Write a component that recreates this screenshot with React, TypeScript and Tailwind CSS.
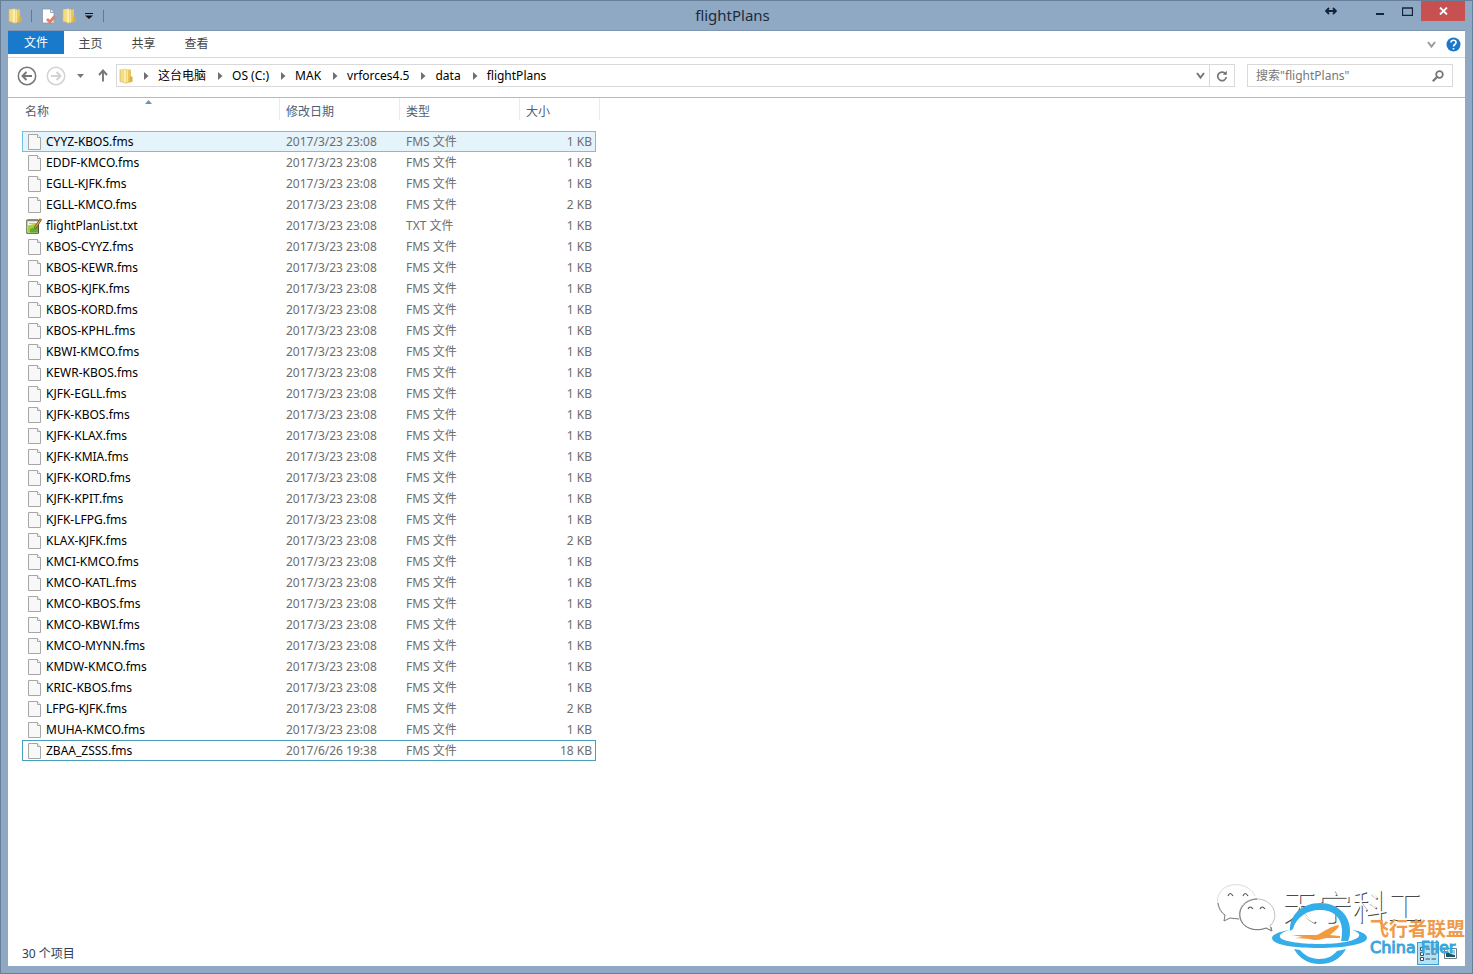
import React from "react";

type FileRow = { name: string; date: string; kind: string; size: string };

const common = "2017/3/23 23:08";
const twoKb = ["EGLL-KMCO", "KLAX-KJFK", "LFPG-KJFK"];
const plans = [
  "CYYZ-KBOS", "EDDF-KMCO", "EGLL-KJFK", "EGLL-KMCO", "flightPlanList", "KBOS-CYYZ",
  "KBOS-KEWR", "KBOS-KJFK", "KBOS-KORD", "KBOS-KPHL", "KBWI-KMCO", "KEWR-KBOS",
  "KJFK-EGLL", "KJFK-KBOS", "KJFK-KLAX", "KJFK-KMIA", "KJFK-KORD", "KJFK-KPIT",
  "KJFK-LFPG", "KLAX-KJFK", "KMCI-KMCO", "KMCO-KATL", "KMCO-KBOS", "KMCO-KBWI",
  "KMCO-MYNN", "KMDW-KMCO", "KRIC-KBOS", "LFPG-KJFK", "MUHA-KMCO",
];

const files: FileRow[] = [
  ...plans.map((p) => ({
    name: p === "flightPlanList" ? "flightPlanList.txt" : `${p}.fms`,
    date: common,
    kind: p === "flightPlanList" ? "TXT 文件" : "FMS 文件",
    size: twoKb.includes(p) ? "2 KB" : "1 KB",
  })),
  { name: "ZBAA_ZSSS.fms", date: "2017/6/26 19:38", kind: "FMS 文件", size: "18 KB" },
];

const crumbs = ["这台电脑", "OS (C:)", "MAK", "vrforces4.5", "data", "flightPlans"];

function FolderIcon() {
  return (
    <svg width="16" height="16" viewBox="0 0 16 16" className="shrink-0">
      <path d="M1 1.5 7 .5v14l-6-1z" fill="#f3dc83" />
      <path d="M5 2l4-.8v13.3l-4 .8z" fill="#fbeeb0" />
      <path d="M7 1.5h5V13L7 15.2z" fill="#e9c75c" />
      <path d="M7.5 2.5 9 2v12.5l-1.500.5z" fill="#f8e79d" />
      <path d="M11 8.500h2.500v5l-3 1.200z" fill="#d9b044" />
      <path d="M1 1.500v12l6 1.700 6.500-2.200" fill="none" stroke="#d7b75a" strokeWidth=".7" />
    </svg>
  );
}

function PropertiesIcon() {
  return (
    <svg width="16" height="16" viewBox="0 0 16 16">
      <path d="M1.500 1h8L13 4.500V15H1.500z" fill="#fff" stroke="#8b97a8" strokeWidth=".8" />
      <path d="M9.500 1v3.500H13" fill="#dfe5ec" stroke="#8b97a8" strokeWidth=".8" />
      <path d="m6 11 3 3 4.500-5.500" fill="none" stroke="#e08063" strokeWidth="2.800" />
    </svg>
  );
}

function PageIcon() {
  return (
    <svg width="16" height="16" viewBox="0 0 16 16" className="shrink-0">
      <path d="M2.500.5h9l3 3v12h-12z" fill="#f8f8f8" stroke="#a6a6a6" />
      <path d="M11.500.5v3h3" fill="#fff" stroke="#a6a6a6" />
    </svg>
  );
}

function TextFileIcon() {
  return (
    <svg width="16" height="16" viewBox="0 0 16 16" className="shrink-0">
      <path d="M.8 2h11.700v13.300H.8z" fill="#f5f8e8" stroke="#4c5540" />
      <path d="M2 7.500 12 5v9.500H2z" fill="#a8cf38" />
      <path d="M4 11l8-3v6.500H4z" fill="#62aa35" />
      <path d="M3 1v2.500M5 1v2.500M7 1v2.500M9 1v2.500M11 1v2.500" stroke="#59616a" strokeWidth=".8" />
      <path d="M3 5.500h7" stroke="#9fb0b8" strokeWidth=".8" />
      <path d="m9 10 6-9" stroke="#7b4b20" strokeWidth="2.600" />
      <path d="m9.300 9.500 5.400-8" stroke="#e8a33a" strokeWidth="1.300" />
    </svg>
  );
}

function Chevron({ className }: { className: string }) {
  return (
    <svg width="9" height="9" viewBox="0 0 9 9" className={className} fill="none" stroke="currentColor" strokeWidth="2">
      <path d="m1 2 3.500 4.500L8 2" />
    </svg>
  );
}

function Crumb({ label }: { label: string }) {
  return (
    <li className="flex items-center">
      <svg width="5" height="8" viewBox="0 0 5 8" className="mr-[9px]" fill="#707070">
        <path d="M0 0l4.500 4L0 8z" />
      </svg>
      <a href="#" className="text-black">{label}</a>
    </li>
  );
}

function Watermark() {
  return (
    <div aria-hidden="true" className="pointer-events-none absolute right-0 bottom-0 h-[84px] w-[252px]">
      <svg width="66" height="54" viewBox="0 0 66 54" className="absolute top-0 left-0" fill="#fff">
        <path d="M11 33C2 26 2 11 13 5c10-5 24-2 29 9" stroke="#dcdcdc" />
        <path d="M5 21c1 6 4 10 7 12l-1 6 6-3 9 1" stroke="#777" />
        <path d="M58 43c8-9 3-24-12-26-14-1-22 9-19 20 3 10 17 13 26 9l5 3-1-6z" stroke="#bdbdbd" />
        <path d="M44 17c-13 1-20 11-16 21 3 9 16 12 25 8l6 3-1-4" fill="none" stroke="#777" />
        <path d="M15 14q2-5 5 0M30 14q2-5 5 0M35 27q2-4 5 0M47 27q2-4 5 0" fill="none" stroke="#555" strokeWidth="1.200" />
      </svg>
      <span className="absolute top-1 left-[69px] text-[35px] leading-[42px] font-light whitespace-nowrap text-white [text-shadow:1px_1px_0_#4a4a4a]">
        天宁科工
      </span>
      <svg width="110" height="71" viewBox="0 0 110 71" className="absolute top-[13px] left-[52px]">
        <path d="M25 36C24 20 37 8 55 8c18 0 31 13 30 29 0 4-1 7-2 9h-7c1-4 1-8 1-12-1-12-9-19-22-19-14 0-24 8-27 19z" fill="#35ade8" />
        <path d="M25 35C12 37 7 40 7 43c0 7 23 10 47 10 26 0 48-4 48-10 0-4-6-7-15-8 6 2 8 4 7 6-2 5-20 8-39 8-21 0-39-3-40-7-1-3 3-5 10-7z" fill="#35ade8" />
        <path d="M29 54c5 9 14 15 26 15s21-6 26-15l-9 2c-4 5-10 8-18 8s-15-4-19-9z" fill="#35ade8" />
        <path d="M27 40l25 0c8-4 14-9 22-10 0 3-5 7-9 10l10 1v2l-13 0c-6 1-8 2-13 2-7-2-13-1-19-2l8-1z" fill="#f39a3f" />
      </svg>
      <div className="absolute top-[38px] left-[157px] font-bold whitespace-nowrap">
        <div className="text-[19px] leading-[19px] text-[#f09a4b]">飞行者联盟</div>
        <div className="font-['DejaVu_Sans'] text-[16px] leading-[18px] font-normal text-[#38a6de] [-webkit-text-stroke:1px_#38a6de]">China Flier</div>
      </div>
    </div>
  );
}

export default function App() {
  return (
    <div className="flex min-h-screen flex-col border border-[#687f99] bg-[#8fa8c3] px-[7px] pb-[7px] font-['Noto_Sans','Noto_Sans_CJK_SC',sans-serif] text-[12px] leading-4">
      <header className="grid h-[29px] shrink-0 grid-cols-[1fr_auto_1fr] items-start">
        <div className="flex h-[29px] items-center gap-[5px]">
          <FolderIcon />
          <span className="mx-[2px] h-3 w-px bg-[#62768f]" />
          <button aria-label="属性" className="ml-[2px]"><PropertiesIcon /></button>
          <button aria-label="新建文件夹"><FolderIcon /></button>
          <button aria-label="自定义快速访问工具栏" className="ml-[2px]">
            <svg width="8" height="6" viewBox="0 0 8 6"><path d="M0 0h8v1H0zM0 2.500h8L4 6z" fill="#111" /></svg>
          </button>
          <span className="ml-[5px] h-3 w-px bg-[#62768f]" />
        </div>
        <h1 className="pr-2 text-[15px] leading-[28px] text-[#1c2b3c]">flightPlans</h1>
        <div className="flex items-start justify-end">
          <button aria-label="调整大小" className="mr-[26px] flex h-5 w-5 items-center justify-center">
            <svg width="12" height="8" viewBox="0 0 12 8" fill="none" stroke="#142438" strokeWidth="1.800"><path d="M1 4h10M4 1 1 4l3 3M8 1l3 3-3 3" /></svg>
          </button>
          <button aria-label="最小化" className="flex h-[22px] w-[27px] items-center justify-center">
            <svg width="9" height="8" viewBox="0 0 9 8"><path d="M0 5h8v2H0z" fill="#142438" /></svg>
          </button>
          <button aria-label="最大化" className="flex h-5 w-[27px] items-center justify-center">
            <svg width="11" height="9" viewBox="0 0 11 9"><path d="M.5 1h10v7.500H.5zM0 1h11" fill="none" stroke="#142438" strokeWidth="1.300" /></svg>
          </button>
          <button aria-label="关闭" className="flex h-5 w-[44px] items-center justify-center bg-[#c75050]">
            <svg width="9" height="8" viewBox="0 0 9 8" stroke="#fff" strokeWidth="1.800"><path d="m1 .5 7 7M8 .5l-7 7" /></svg>
          </button>
        </div>
      </header>

      <div className="relative flex flex-1 flex-col border-t border-[#7f96b0] bg-white">
        <nav className="flex h-[27px] items-start border-b border-[#d9dadb] text-[#444]">
          <button className="h-[23px] w-14 bg-[#1979ca] text-white">文件</button>
          <button className="h-[26px] w-[53px]">主页</button>
          <button className="h-[26px] w-[53px]">共享</button>
          <button className="h-[26px] w-[53px]">查看</button>
          <div className="ml-auto flex h-[26px] items-center gap-[10px] pr-1">
            <button aria-label="展开功能区"><Chevron className="text-[#9a9a9a]" /></button>
            <button aria-label="帮助">
              <svg width="15" height="15" viewBox="0 0 15 15">
                <circle cx="7.500" cy="7.500" r="7" fill="#1b78c8" />
                <path d="M5 5.500c0-3 5-3 5 0 0 2-2.500 2-2.500 4M7.500 11v1.500" fill="none" stroke="#fff" strokeWidth="1.700" />
              </svg>
            </button>
          </div>
        </nav>

        <div className="flex h-[40px] items-center border-b border-[#b9babb] pr-3 pb-1 pl-[9px]">
          <button aria-label="后退" className="mr-[9px]">
            <svg width="20" height="20" viewBox="0 0 20 20" fill="none" stroke="#777"><circle cx="10" cy="10" r="8.700" strokeWidth="1.500" /><path d="M15 10H6M9.500 6 5.500 10l4 4" strokeWidth="2" /></svg>
          </button>
          <button aria-label="前进" className="mr-[11px]">
            <svg width="20" height="20" viewBox="0 0 20 20" fill="none" stroke="#d2d2d2"><circle cx="10" cy="10" r="8.700" strokeWidth="1.500" /><path d="M5 10h9M10.500 6l4 4-4 4" strokeWidth="2" /></svg>
          </button>
          <button aria-label="最近浏览的位置" className="mr-[14px]">
            <svg width="7" height="4" viewBox="0 0 7 4"><path d="M0 0h7L3.500 4z" fill="#777" /></svg>
          </button>
          <button aria-label="向上" className="mr-2">
            <svg width="10" height="13" viewBox="0 0 10 13" fill="none" stroke="#777" strokeWidth="1.900"><path d="M5 12.500V1.500M1 6l4-4.500L9 6" /></svg>
          </button>
          <div className="flex h-[23px] flex-1 items-center border border-[#d9d9d9] pl-[2px]">
            <FolderIcon />
            <ol className="ml-[9px] flex items-center gap-3">
              {crumbs.map((c) => <Crumb key={c} label={c} />)}
            </ol>
            <button aria-label="以前的位置" className="mr-1 ml-auto"><Chevron className="text-[#777]" /></button>
            <button aria-label="刷新" className="flex h-full w-[25px] items-center justify-center border-l border-[#d9d9d9]">
              <svg width="12" height="12" viewBox="0 0 12 12" fill="none" stroke="#777" strokeWidth="1.700"><path d="M9.800 4.300A4.300 4.300 0 1 0 10.300 7" /><path d="M10.800.8v4H6.800z" fill="#777" stroke="none" /></svg>
            </button>
          </div>
          <label className="ml-3 flex h-[23px] w-[206px] items-center border border-[#d9d9d9] pr-2 pl-2">
            <input type="text" aria-label="搜索" placeholder={'搜索"flightPlans"'} className="min-w-0 flex-1 outline-none placeholder:text-[#777]" />
            <svg width="12" height="12" viewBox="0 0 12 12" fill="none" stroke="#777" strokeWidth="1.800"><circle cx="7.500" cy="4.500" r="3.300" /><path d="M5 7 .8 11.200" strokeWidth="2.200" /></svg>
          </label>
        </div>

        <main className="flex-1 pl-[14px]">
          <table className="w-[574px] table-fixed border-separate border-spacing-0">
            <colgroup>
              <col className="w-[258px]" />
              <col className="w-[120px]" />
              <col className="w-[120px]" />
              <col className="w-[76px]" />
            </colgroup>
            <thead className="text-left text-[#4c607a]">
              <tr className="h-[33px] align-top">
                <th className="relative p-0 font-normal">
                  <div className="h-[22px] border-r border-[#e8ecf1] pt-[6px] pl-[3px]">名称</div>
                  <svg width="7" height="4" viewBox="0 0 7 4" className="absolute top-[2px] left-[123px]"><path d="M0 4 3.500 0 7 4z" fill="#6e94ad" /></svg>
                </th>
                <th className="p-0 font-normal"><div className="h-[22px] border-r border-[#e8ecf1] pt-[6px] pl-[6px]">修改日期</div></th>
                <th className="p-0 font-normal"><div className="h-[22px] border-r border-[#e8ecf1] pt-[6px] pl-[6px]">类型</div></th>
                <th className="p-0 font-normal"><div className="-mr-1 h-[22px] border-r border-[#e8ecf1] pt-[6px] pl-[6px]">大小</div></th>
              </tr>
            </thead>
            <tbody className="text-[#6d6d6d]">
              {files.map((f, i) => (
                <tr
                  key={f.name}
                  className={
                    i === 0
                      ? "h-[21px] bg-[#e5f3fb] outline outline-[#70c0e7] -outline-offset-1"
                      : i === files.length - 1
                        ? "h-[21px] outline outline-[#4a9fc0] -outline-offset-1"
                        : "h-[21px]"
                  }
                >
                  <td className="p-0 pl-1">
                    <div className="flex items-center gap-1 text-black">
                      {f.name.endsWith(".txt") ? <TextFileIcon /> : <PageIcon />}
                      <span>{f.name}</span>
                    </div>
                  </td>
                  <td className="p-0 pl-[6px]">{f.date}</td>
                  <td className="p-0 pl-[6px]">{f.kind}</td>
                  <td className="p-0 pr-1 text-right">{f.size}</td>
                </tr>
              ))}
            </tbody>
          </table>
        </main>

        <footer className="flex h-[25px] items-center justify-between pl-[14px] text-[#2c405a]">
          <span>30 个项目</span>
          <div className="flex items-center gap-[5px] pr-2">
            <button aria-label="详细信息" className="flex h-[23px] w-[22px] items-center justify-center border border-[#3c9fd3] bg-[#b5e1f5]">
              <svg width="16" height="14" viewBox="0 0 16 14" fill="none" stroke="#3c4c58">
                <path d="M.5.5h3v3h-3zM.5 5.500h3v3h-3zM.5 10.500h3v3h-3z" fill="#fff" />
                <path d="M5.500 2H10M11.500 2H16M5.500 7H10M11.500 7H16M5.500 12H10M11.500 12H16" />
              </svg>
            </button>
            <button aria-label="大图标">
              <svg width="13" height="11" viewBox="0 0 13 11"><path d="M.5.5h12v10H.5z" fill="#fff" stroke="#707b82" /><path d="M2 3l5 3 4 1v2H2z" fill="#1d5566" /><path d="M5 2h6v4L7 5z" fill="#8ccbeb" /></svg>
            </button>
          </div>
        </footer>
        <Watermark />
      </div>
    </div>
  );
}
